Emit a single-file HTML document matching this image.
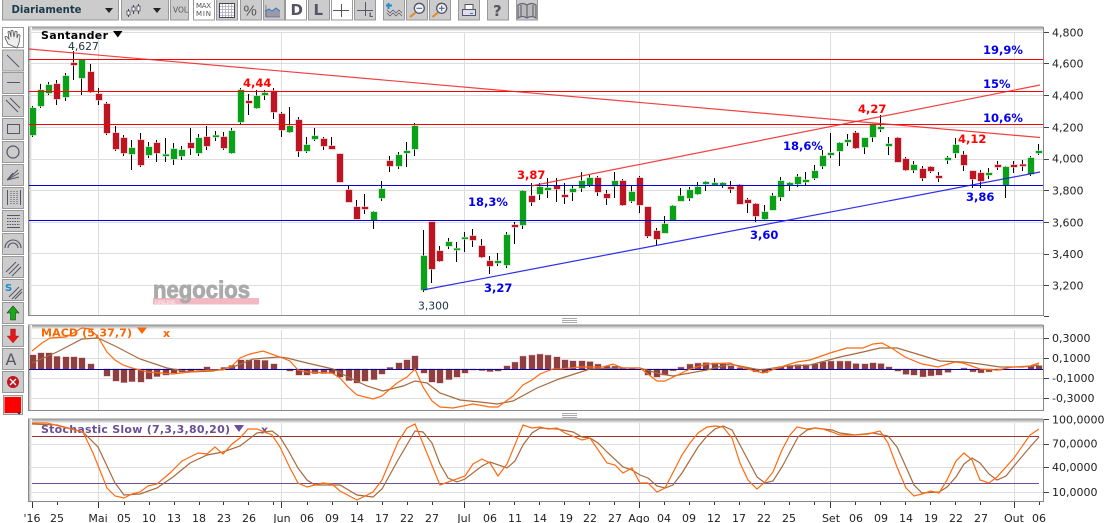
<!DOCTYPE html>
<html lang="pt"><head><meta charset="utf-8"><title>Santander</title>
<style>html,body{margin:0;padding:0;background:#fff;overflow:hidden}svg{display:block}text{font-family:"DejaVu Sans","Liberation Sans",sans-serif}.b{font-weight:bold;font-size:11.5px}.a{font-size:11px;fill:#222}.d{font-size:11px;fill:#222;text-anchor:middle}</style></head>
<body>
<svg xmlns="http://www.w3.org/2000/svg" width="1111" height="523" viewBox="0 0 1111 523">
<defs>
<linearGradient id="t" x1="0" y1="0" x2="0" y2="1"><stop offset="0" stop-color="#8a8a8a"/><stop offset=".5" stop-color="#c8c8c8"/><stop offset="1" stop-color="#fff"/></linearGradient>
<linearGradient id="l" x1="0" y1="0" x2="1" y2="0"><stop offset="0" stop-color="#a0a0a0"/><stop offset=".5" stop-color="#d0d0d0"/><stop offset="1" stop-color="#fff"/></linearGradient>
</defs>
<rect width="1111" height="523" fill="#fff"/>

<!-- top toolbar buttons -->
<g fill="#ccc" stroke="#999">
<rect x="2.5" y="-2" width="116" height="22"/><rect x="121.5" y="-2" width="47" height="22"/><rect x="170.5" y="-2" width="18" height="22"/>
<rect x="193.5" y="-2" width="21" height="22" fill="#fff"/><rect x="216.5" y="-2" width="21" height="22"/><rect x="240.5" y="-2" width="21" height="22"/><rect x="263.5" y="-2" width="21" height="22"/>
<rect x="285.5" y="-2" width="21" height="22" fill="#fff"/><rect x="308.5" y="-2" width="21" height="22"/><rect x="331.5" y="-2" width="21" height="22" fill="#fff"/><rect x="354.5" y="-2" width="21" height="22"/>
<rect x="383.5" y="-2" width="21" height="22"/><rect x="406.5" y="-2" width="21" height="22"/><rect x="429.5" y="-2" width="21" height="22"/><rect x="458.5" y="-2" width="21" height="22"/><rect x="487.5" y="-2" width="21" height="22"/><rect x="516.5" y="-2" width="21" height="22"/>
</g>
<text x="11.5" y="13" font-size="10.5" font-weight="bold" fill="#1d3a48" textLength="70" lengthAdjust="spacingAndGlyphs">Diariamente</text>
<path d="M105 8h8l-4 5zM153 8h8l-4 5z" fill="#222"/>
<path d="M128.500 9v8M133.500 5v9M138.500 4v10" stroke="#445" fill="none"/>
<path d="M127 11h3v4h-3zM132 7h3v4h-3zM137 6h3v5h-3z" fill="#fff" stroke="#445" stroke-width=".8"/>
<text x="173" y="12.500" font-size="7.500" fill="#555" textLength="15">VOL</text>
<text x="196" y="8" font-size="7" fill="#555" textLength="15">MAX</text><text x="196" y="16" font-size="7" fill="#555" textLength="15">MIN</text>
<rect x="219.500" y="3.500" width="15" height="14" fill="#fff" stroke="#445"/>
<path d="M222.500 4v13M225.500 4v13M228.500 4v13M231.500 4v13M220 6.500h14M220 9.500h14M220 12.500h14M220 15.500h14" stroke="#aab" stroke-width=".8"/>
<text x="243.500" y="15.500" font-size="15" fill="#555" style="font-family:'Liberation Sans',sans-serif">%</text>
<path d="M265 11l4-2 3 2 4-3 4 3v6h-15z" fill="#99a" stroke="none"/><path d="M265 11l4-2 3 2 4-3 4 3" stroke="#2a7fc0" fill="none"/><path d="M266 5v12h14" stroke="#667" fill="none" stroke-width=".7"/>
<text x="290.500" y="15" font-size="15" font-weight="bold" fill="#556">D</text>
<text x="313.500" y="15" font-size="15" font-weight="bold" fill="#556">L</text>
<path d="M341.500 4v13M333 10.500h16M365.500 2v14M357 10.500h16" stroke="#556" fill="none"/>
<text x="369" y="17" font-size="6.500" fill="#556" font-weight="bold">L</text>
<path d="M386 5.500h6M388.500 3v6" stroke="#1a8cd0" stroke-width="2"/>
<path d="M387 13l3 3 3-3 3 3 3-3 3 3M387 10l3 3 3-3 3 3 3-3 3 3" stroke="#556" stroke-width=".7" fill="none"/>
<circle cx="419.300" cy="8.300" r="5" fill="#eef3fb" stroke="#556" stroke-width="1.300"/><path d="M416.500 8.300h5.600" stroke="#556"/><path d="M415.500 12.500l-5.500 4.500" stroke="#e08a20" stroke-width="2"/>
<circle cx="441.700" cy="8.300" r="5" fill="#eef3fb" stroke="#556" stroke-width="1.300"/><path d="M439 8.300h5.600M441.700 5.500v5.600" stroke="#556"/><path d="M438 12.500l-5.500 4.500" stroke="#e08a20" stroke-width="2"/>
<path d="M465 4.500h8v5h-8z" fill="#fff" stroke="#556"/><path d="M462.500 9.500h13v6h-13z" fill="#dde" stroke="#556"/><path d="M470 13.500h3" stroke="#1a8cd0"/>
<text x="493" y="16" font-size="15" font-weight="bold" fill="#556">?</text>
<path d="M518 5c3-2 6-2 9 0c3-2 6-2 9 0v13c-3-2-6-2-9 0c-3-2-6-2-9 0zM527 5v13M521 5v11M533 5v11" fill="#bbb" stroke="#667" stroke-width="1.200"/>

<!-- left toolbar -->
<g fill="#ccc" stroke="#999">
<rect x="2.500" y="27.500" width="21" height="20" fill="#fff"/>
<rect x="2.500" y="50" width="21" height="21"/><rect x="2.500" y="72.500" width="21" height="21"/><rect x="2.500" y="95.500" width="21" height="21"/><rect x="2.500" y="118.500" width="21" height="21"/><rect x="2.500" y="141.500" width="21" height="21"/><rect x="2.500" y="164.500" width="21" height="21"/><rect x="2.500" y="187.500" width="21" height="21"/><rect x="2.500" y="210.500" width="21" height="21"/><rect x="2.500" y="233.500" width="21" height="21"/><rect x="2.500" y="256.500" width="21" height="21"/><rect x="2.500" y="279.500" width="21" height="21"/><rect x="2.500" y="302.500" width="21" height="21"/><rect x="2.500" y="325.500" width="21" height="21"/><rect x="2.500" y="348.500" width="21" height="21"/><rect x="2.500" y="371.500" width="21" height="21"/>
<rect x="3.500" y="395.500" width="19" height="19" fill="#ddd"/>
</g>
<path d="M8 44c-1-3-3-5-3-7c0-1 2-1 3 1l1 1-1-7c0-1 2-1 2 1l1 4 0-6c0-1 2-1 2 0l1 6 1-5c0-1 2-1 2 0l0 6 1-3c1-1 2 0 2 1l-1 7c-1 2-1 3-2 5z" fill="#eee" stroke="#555" stroke-width=".8"/>
<path d="M7 55l12 12M7 82.500h13M6 100l12 12M10 98l10 10" stroke="#556" fill="none"/>
<rect x="7.500" y="124.500" width="12" height="9" fill="none" stroke="#556"/>
<circle cx="13" cy="152" r="6" fill="none" stroke="#556" stroke-width="1.200"/>
<path d="M7 180l11-10M7 180l12-7M7 180l12-3M7 180l6-7" stroke="#556" fill="none"/>
<path d="M7.500 190v15M20.500 190v15M11 190v15M14 190v15M17 190v15" stroke="#556" fill="none"/>
<path d="M11 190v15M14 190v15M17 190v15" stroke="#ccc" stroke-dasharray="1 1" fill="none"/>
<path d="M7 215.500h13M7 227.500h13" stroke="#556" fill="none"/><path d="M7 218.500h13M7 221.500h13M7 224.500h13" stroke="#556" stroke-dasharray="1.500 1" fill="none"/>
<path d="M5 248a8 8 0 0 1 16 0M8 248a5 5 0 0 1 10 0" stroke="#556" fill="none" stroke-width="1.100"/>
<path d="M6 272l10-10M9 274l10-10M12 276l9-9" stroke="#556" fill="none"/>
<text x="5" y="291" font-size="10" font-weight="bold" fill="#1a8cd0">S</text>
<path d="M9 297l10-10M12 299l10-10M15 299l7-7" stroke="#556" fill="none"/>
<path d="M13 306l6 7h-3.500v7h-5v-7h-3.500z" fill="#10b010" stroke="#333" stroke-width=".6"/>
<path d="M13 343l6-7h-3.500v-7h-5v7h-3.500z" fill="#e8141c" stroke="#733" stroke-width=".4"/>
<text x="5.500" y="365" font-size="16" fill="#556">A</text>
<circle cx="13" cy="382" r="6" fill="#c0141f"/><path d="M10 379l6 6M16 379l-6 6" stroke="#fff" stroke-width="1.300"/>
<rect x="4.500" y="397" width="16.500" height="16" fill="#f00"/><path d="M17 412.500h4l-2 2z" fill="#222"/>

<!-- main chart panel -->
<rect x="28" y="26.500" width="1015" height="5" fill="url(#t)"/>
<rect x="28" y="27" width="4" height="288" fill="url(#l)"/>
<g stroke="#ddd" fill="none">
<path d="M29 32.500h1014M29 63.500h1014M29 95.500h1014M29 127.500h1014M29 159.500h1014M29 190.500h1014M29 222.500h1014M29 253.500h1014M29 285.500h1014"/>
<path d="M98.500 32v283M281.500 32v283M464.500 32v283M639.500 32v283M830.500 32v283M1014.500 32v283"/>
</g>
<path d="M28.500 27v288.500H1043.500V27" fill="none" stroke="#888"/>
<path d="M1044 32.500h5M1044 63.500h5M1044 95.500h5M1044 127.500h5M1044 159.500h5M1044 190.500h5M1044 222.500h5M1044 254.500h5M1044 285.500h5M1044 316.500h5" stroke="#444"/>
<g class="a">
<text class="a" x="1052" y="36.500">4,800</text><text class="a" x="1052" y="67.500">4,600</text><text class="a" x="1052" y="99.500">4,400</text><text class="a" x="1052" y="131.500">4,200</text><text class="a" x="1052" y="162.500">4,000</text><text class="a" x="1052" y="194.500">3,800</text><text class="a" x="1052" y="226.500">3,600</text><text class="a" x="1052" y="258">3,400</text><text class="a" x="1052" y="289.500">3,200</text>
</g>

<!-- watermark -->
<rect x="153" y="298" width="106" height="6.500" fill="#f2b9c2"/>
<text x="153" y="298" font-size="24" font-weight="bold" fill="#aaa" stroke="#aaa" stroke-width=".9" textLength="97" lengthAdjust="spacingAndGlyphs" style="font-family:'Liberation Sans',sans-serif">negocios</text>
<text x="155" y="304" font-size="5.500" fill="#fff" style="font-family:'Liberation Serif',serif">ONLINE</text>

<!-- wicks -->
<path stroke="#000" fill="none" d="M32.500 106V137M40.500 84V108M48.500 82V95M56.500 80V105M65.500 73V101M73.500 51V80M81.500 60V95M90.500 64V93M98.500 88V105M106.500 102V135M115.500 126V151M123.500 135V156M131.500 140V170M140.500 133V167M148.500 142V158M156.500 140V162M165.500 138V162M173.500 143V165M181.500 146V160M190.500 128V155M198.500 134V156M206.500 126V150M215.500 131V141M223.500 132V150M231.500 128V154M240.500 88V124M248.500 94V115M256.500 90V109M264.500 90V100M273.500 88V119M281.500 112V137M289.500 107V133M298.500 117V157M306.500 137V153M314.500 128V141M323.500 137V150M331.500 137V149M339.500 154V182M348.500 186V202M356.500 200V219M364.500 194V214M373.500 211V229M381.500 181V201M389.500 156V172M398.500 152V169M406.500 142V167M414.500 123V156M423.500 230V292M431.500 222V283M439.500 246V262M448.500 238V249M456.500 242V262M464.500 232V252M472.500 229V247M481.500 239V258M489.500 256V274M497.500 253V266M506.500 232V268M514.500 222V244M522.500 190V229M531.500 183V206M539.500 183V200M547.500 178V198M556.500 178V202M564.500 183V204M572.500 186V201M581.500 172V192M589.500 175V187M597.500 176V196M606.500 190V205M614.500 172V198M622.500 179V206M631.500 186V203M639.500 176V213M647.500 207V238M656.500 228V245M664.500 216V233M672.500 205V220M680.500 188V201M689.500 187V201M697.500 182V195M705.500 181V191M714.500 178V186M722.500 182V188M730.500 181V193M739.500 184V204M747.500 198V213M755.500 203V222M764.500 205V220M772.500 193V210M780.500 177V201M789.500 182V191M797.500 174V187M805.500 172V185M814.500 165V180M822.500 150V169M830.500 133V158M839.500 142V166M847.500 134V146M855.500 131V149M864.500 138V154M872.500 123V142M880.500 115V132M888.500 137V155M897.500 137V162M905.500 157V171M913.500 161V173M922.500 166V181M930.500 166V173M938.500 172V182M947.500 156V164M955.500 138V158M963.500 151V171M972.500 171V188M980.500 170V188M988.500 168V179M997.500 161V170M1005.500 166V198M1013.500 161V173M1022.500 160V171M1030.500 156V176M1038.500 144V155"/>
<!-- green bodies -->
<path fill="#0aa018" stroke="#b7e0bb" stroke-width="1.200" style="paint-order:stroke" d="M30 108h6V135h-6zM38 90h6V106h-6zM46 85h6V93h-6zM63 76h6V97h-6zM79 60h6V78h-6zM129 148h6V154h-6zM146 147h6V155h-6zM163 154.500h6V156h-6zM171 149h6V159h-6zM179 150h6V156h-6zM196 138h6V153h-6zM213 135.500h6V137h-6zM229 131h6V153h-6zM238 90h6V122h-6zM254 96h6V108h-6zM262 93h6V95h-6zM287 126h6V132h-6zM304 145h6V151h-6zM312 136h6V139h-6zM371 212h6V220h-6zM379 189h6V198h-6zM396 155h6V166h-6zM404 151h6V153h-6zM412 126h6V149h-6zM421 256h6V290h-6zM446 242h6V246h-6zM454 248.500h6V250h-6zM462 237.500h6V239h-6zM495 261h6V263h-6zM504 235h6V265h-6zM520 191h6V225h-6zM537 187h6V194h-6zM545 188h6V190h-6zM570 189h6V192h-6zM579 181h6V188h-6zM587 178h6V185h-6zM612 181h6V186h-6zM629 192h6V201h-6zM662 224h6V233h-6zM670 206h6V220h-6zM678 196h6V201h-6zM687 190h6V198h-6zM695 187h6V194h-6zM703 182h6V184h-6zM712 183h6V185h-6zM720 183h6V185h-6zM762 212h6V219h-6zM770 196h6V210h-6zM778 181h6V197h-6zM787 183h6V185h-6zM795 177h6V184h-6zM803 180h6V182h-6zM812 171h6V178h-6zM820 156h6V166h-6zM828 153h6V155h-6zM837 143h6V151h-6zM845 140h6V142h-6zM862 138h6V147h-6zM870 124h6V137h-6zM878 127h6V129h-6zM886 144h6V146h-6zM911 165h6V170h-6zM945 158h6V160h-6zM953 145h6V153h-6zM986 173h6V175h-6zM1003 167h6V185h-6zM1028 158h6V174h-6zM1036 151h6V153h-6z"/>
<!-- red bodies -->
<path fill="#bc1420" stroke="#ecb4ba" stroke-width="1.200" style="paint-order:stroke" d="M54 84h6V99h-6zM71 63h6V65h-6zM88 72h6V92h-6zM96 94h6V100h-6zM104 104h6V133h-6zM113 133h6V149h-6zM121 138h6V153h-6zM138 140h6V165h-6zM154 143h6V153h-6zM188 143h6V148h-6zM204 137h6V146h-6zM221 137h6V148h-6zM246 101h6V103h-6zM271 91h6V112h-6zM279 114h6V130h-6zM296 120h6V151h-6zM321 139h6V146h-6zM329 146h6V149h-6zM337 154h6V182h-6zM346 190h6V202h-6zM354 207h6V219h-6zM362 207h6V209h-6zM387 161h6V166h-6zM429 222h6V269h-6zM437 251h6V261h-6zM470 236h6V240h-6zM479 246h6V257h-6zM487 261h6V266h-6zM512 225h6V227h-6zM529 196h6V202h-6zM554 186h6V189h-6zM562 195h6V197h-6zM595 178h6V192h-6zM604 194h6V198h-6zM620 181h6V205h-6zM637 178h6V205h-6zM645 207h6V236h-6zM654 231h6V239h-6zM728 187h6V189h-6zM737 185h6V204h-6zM745 200h6V203h-6zM753 204h6V216h-6zM853 133h6V148h-6zM895 138h6V162h-6zM903 159h6V170h-6zM920 169h6V178h-6zM928 167h6V171h-6zM936 176h6V178h-6zM961 155h6V165h-6zM970 171h6V179h-6zM978 173h6V181h-6zM995 165h6V167h-6zM1011 165h6V167h-6zM1020 164.500h6V166h-6z"/>

<!-- trend lines -->
<g fill="none">
<path d="M29 59.500H1043M29 91.500H1043M29 124.500H1043" stroke="#f00"/>
<path d="M29 185.500H1043M29 220.500H1043" stroke="#00d"/>
<path d="M29 49L1040 137.500" stroke="#f02020" stroke-width="1.200" opacity=".85"/>
<path d="M531 186L1040 85" stroke="#f02020" stroke-width="1.200" opacity=".85"/>
<path d="M423 290L1040 172" stroke="#1818e8" stroke-width="1.200" opacity=".9"/>
</g>

<!-- chart labels -->
<text x="41" y="39" font-size="11" font-weight="bold" fill="#000" textLength="67">Santander</text>
<path d="M113 31h9.500l-4.700 6.500z" fill="#000"/>
<text x="68" y="50" font-size="10.800" fill="#234">4,627</text>
<text x="418" y="309.500" font-size="10.800" fill="#234">3,300</text>
<g fill="#f00" class="b">
<text class="b" x="243" y="87">4,44</text><text class="b" x="517" y="179">3,87</text><text class="b" x="858" y="113">4,27</text><text class="b" x="958" y="143">4,12</text>
</g>
<g fill="#00e" class="b">
<text class="b" x="484" y="292">3,27</text><text class="b" x="468" y="206">18,3%</text><text class="b" x="750" y="239">3,60</text><text class="b" x="783" y="150">18,6%</text><text class="b" x="966" y="201">3,86</text><text class="b" x="983" y="54">19,9%</text><text class="b" x="983" y="88">15%</text><text class="b" x="983" y="122">10,6%</text>
</g>

<!-- splitters -->
<path d="M562 318.500h15M562 320.500h15M562 322.500h15M562 413.500h15M562 415.500h15M562 417.500h15" stroke="#aaa"/>

<!-- MACD panel -->
<rect x="28" y="324.500" width="1015" height="5" fill="url(#t)"/>
<rect x="28" y="325" width="4" height="85" fill="url(#l)"/>
<path d="M29 338.500h1014M29 358.500h1014M29 378.500h1014M29 398.500h1014M98.500 330v80M281.500 330v80M464.500 330v80M639.500 330v80M830.500 330v80M1014.500 330v80" stroke="#ddd" fill="none"/>
<path d="M28.500 325v85.500H1043.500V325" fill="none" stroke="#888"/>
<path fill="#8f3f3f" stroke="#d8b8b8" stroke-width="1" style="paint-order:stroke" d="M30 369V355h6V369zM38 369V353h6V369zM46 369V353h6V369zM54 369V356.500h6V369zM63 369V357h6V369zM71 369V357h6V369zM79 369V358h6V369zM88 369V364h6V369zM104 369V376h6V369zM113 369V381h6V369zM121 369V382.500h6V369zM129 369V381.500h6V369zM138 369V382h6V369zM146 369V379h6V369zM154 369V376.500h6V369zM163 369V375h6V369zM171 369V373h6V369zM179 369V372h6V369zM188 369V372h6V369zM196 369V370h6V369zM204 369V367h6V369zM221 369V367.500h6V369zM229 369V365.500h6V369zM238 369V360h6V369zM246 369V360h6V369zM254 369V360h6V369zM262 369V360.500h6V369zM271 369V364h6V369zM287 369V371h6V369zM296 369V375h6V369zM304 369V375h6V369zM312 369V373.500h6V369zM321 369V373.500h6V369zM329 369V373.500h6V369zM337 369V377h6V369zM346 369V380.500h6V369zM354 369V383h6V369zM362 369V381h6V369zM371 369V379.500h6V369zM379 369V374h6V369zM387 369V367.500h6V369zM396 369V363h6V369zM404 369V360h6V369zM412 369V356h6V369zM421 369V373h6V369zM429 369V382h6V369zM437 369V383h6V369zM446 369V379.500h6V369zM454 369V377h6V369zM462 369V373h6V369zM470 369V370h6V369zM479 369V370.500h6V369zM487 369V371.500h6V369zM495 369V371h6V369zM504 369V366h6V369zM512 369V362.300h6V369zM520 369V356.300h6V369zM529 369V355.300h6V369zM537 369V354.300h6V369zM545 369V355.300h6V369zM554 369V357h6V369zM562 369V360h6V369zM570 369V361h6V369zM579 369V361h6V369zM587 369V361.700h6V369zM595 369V364.300h6V369zM604 369V366.300h6V369zM612 369V366.300h6V369zM620 369V367.700h6V369zM629 369V368h6V369zM645 369V375h6V369zM654 369V377h6V369zM662 369V375h6V369zM670 369V370.700h6V369zM678 369V367.300h6V369zM687 369V364.300h6V369zM695 369V363.300h6V369zM703 369V362.700h6V369zM712 369V363h6V369zM720 369V363.700h6V369zM728 369V365.700h6V369zM737 369V367.700h6V369zM745 369V368h6V369zM753 369V371.700h6V369zM762 369V372.700h6V369zM778 369V366.700h6V369zM787 369V365.700h6V369zM795 369V364.700h6V369zM803 369V364.700h6V369zM812 369V364h6V369zM820 369V362h6V369zM828 369V361.300h6V369zM837 369V361.300h6V369zM845 369V361.300h6V369zM853 369V363.700h6V369zM862 369V364h6V369zM870 369V363h6V369zM878 369V363.700h6V369zM886 369V367h6V369zM895 369V371h6V369zM903 369V374.300h6V369zM911 369V375h6V369zM920 369V376.700h6V369zM928 369V375.700h6V369zM936 369V375h6V369zM945 369V372.300h6V369zM961 369V368.300h6V369zM970 369V371.700h6V369zM978 369V372.700h6V369zM986 369V371.700h6V369zM995 369V370.300h6V369zM1028 369V366.300h6V369zM1036 369V365.700h6V369z"/>
<path d="M29 369.500H1043" stroke="#00a" fill="none"/>
<text x="41" y="336.500" font-size="11" font-weight="bold" fill="#f60" textLength="91">MACD (5,37,7)</text>
<path d="M137 327.500h10l-5 6.500z" fill="#f60"/>
<text x="163" y="337" font-size="11" font-weight="bold" fill="#f60">x</text>
<polyline fill="none" stroke="#a86a3c" stroke-width="1.200" points="32,363 57,352 82,339 98,338 115,346 140,359 167,368 190,372 213,371 233,367 253,359 279,357 287,358 307,363 333,369 348,377 367,386 383,391 403,386 415,381 427,383 440,393 460,400 480,402 497,404 513,401 537,388 559,379 590,369 620,368 640,368 660,374 673,376 707,370 730,364 760,370 787,366 810,365 840,357 863,352 880,348 897,348 917,354 940,361 963,362 980,364 1000,367 1023,367 1039,365"/>
<polyline fill="none" stroke="#ff6a10" stroke-width="1.200" points="32,351 42,343 50,338 66,337 82,328 90,329 98,337 107,352 115,360 123,365 132,368 148,372 173,374 190,372 207,370 223,370 233,365 240,358 250,354 263,351 280,357 290,361 298,370 307,372 332,373 340,378 348,387 357,395 373,399 382,396 397,383 407,377 415,369 423,387 432,401 440,407 453,408 473,404 490,407 498,407 513,396 523,385 532,380 540,374 553,369 560,369 580,367 603,367 613,364 623,368 640,368 657,381 665,381 690,369 707,364 730,363 740,367 763,373 787,365 797,362 810,360 830,353 840,350 847,348 863,348 873,344 882,343 893,349 905,357 922,364 938,367 955,362 963,363 980,369 997,370 1013,367 1030,366 1039,363"/>
<path d="M1044 338.500h5M1044 358.500h5M1044 378.500h5M1044 398.500h5" stroke="#444"/>
<text class="a" x="1052" y="342">0,3000</text><text class="a" x="1052" y="362">0,1000</text><text class="a" x="1052" y="382">-0,1000</text><text class="a" x="1052" y="402">-0,3000</text>

<!-- Stochastic panel -->
<rect x="28" y="418.500" width="1015" height="5" fill="url(#t)"/>
<rect x="28" y="419" width="4" height="82" fill="url(#l)"/>
<path d="M29 444.500h1014M29 467.500h1014M29 492.500h1014M98.500 423v78M281.500 423v78M464.500 423v78M639.500 423v78M830.500 423v78M1014.500 423v78" stroke="#ddd" fill="none"/>
<path d="M28.500 419v82.500H1043.500V419" fill="none" stroke="#888"/>
<path d="M32 436.500H1039" stroke="#933"/><path d="M32 483.500H1039" stroke="#6a4e96"/>
<text x="41" y="433" font-size="11" font-weight="bold" fill="#6b4f96" textLength="189">Stochastic Slow (7,3,3,80,20)</text>
<path d="M234 425h10l-5 7z" fill="#6b4f96"/>
<text x="261" y="433.500" font-size="11" font-weight="bold" fill="#6b4f96">x</text>
<polyline fill="none" stroke="#a86a3c" stroke-width="1.200" points="32,424 57,425 83,432 98,447 115,483 124,495 140,494 157,488 173,477 190,463 207,455 223,452 240,446 257,433 272,431 280,437 288,450 298,468 307,480 315,485 323,485 340,485 357,495 373,497 382,489 398,460 415,431 423,432 432,443 440,464 448,478 457,482 465,479 482,466 490,462 507,468 515,461 523,445 532,433 540,428 557,429 573,432 582,437 590,438 598,443 607,452 623,467 632,470 640,475 648,478 657,486 665,488 673,485 682,473 698,447 707,436 715,429 723,426 732,430 740,445 757,477 765,483 773,481 782,467 790,452 798,437 807,430 815,428 832,430 840,433 855,435 873,433 888,436 897,447 906,467 914,485 922,493 939,492 947,487 956,477 964,464 972,458 980,463 989,474 997,480 1006,476 1014,466 1030,447 1039,437"/>
<polyline fill="none" stroke="#ff6a10" stroke-width="1.200" points="32,423 47,423 83,432 93,453 107,488 115,496 124,498 132,494 140,492 148,486 157,484 170,473 182,461 198,453 207,454 215,447 223,454 232,444 240,438 248,429 257,429 272,435 280,447 290,468 298,483 307,487 323,483 332,484 340,491 357,500 373,492 382,480 398,442 407,428 415,424 440,485 465,476 473,464 482,459 490,463 498,476 507,464 523,425 532,428 540,427 548,429 557,428 565,433 582,440 590,438 607,463 615,465 623,473 632,468 640,483 648,483 657,492 665,488 682,455 690,443 698,433 707,427 715,426 723,427 732,438 740,463 748,480 757,489 765,482 773,472 782,450 790,435 797,427 807,429 815,428 823,429 832,432 840,435 855,435 868,434 880,431 888,443 897,467 906,488 914,496 922,494 931,491 939,493 947,480 956,461 964,453 972,460 980,480 989,483 997,477 1014,458 1030,435 1039,429"/>
<path d="M1044 419.500h5M1044 444.500h5M1044 467.500h5M1044 492.500h5" stroke="#444"/>
<text class="a" x="1052" y="423.500">100,0000</text><text class="a" x="1052" y="447.500">70,0000</text><text class="a" x="1052" y="471">40,0000</text><text class="a" x="1052" y="496">10,0000</text>

<!-- date axis -->
<path stroke="#333" fill="none" d="M32.500 502v6M98.500 502v6M281.500 502v6M464.500 502v6M639.500 502v6M830.500 502v6M1014.500 502v6M57.500 502v3M124.500 502v3M149.500 502v3M174.500 502v3M199.500 502v3M223.500 502v3M248.500 502v3M273.500 502v3M307.500 502v3M332.500 502v3M357.500 502v3M382.500 502v3M407.500 502v3M432.500 502v3M489.500 502v3M514.500 502v3M539.500 502v3M564.500 502v3M589.500 502v3M614.500 502v3M664.500 502v3M689.500 502v3M714.500 502v3M739.500 502v3M764.500 502v3M789.500 502v3M814.500 502v3M855.500 502v3M880.500 502v3M905.500 502v3M930.500 502v3M955.500 502v3M980.500 502v3M1039.500 502v3"/>
<text class="d" x="32" y="522">'16</text><text class="d" x="57" y="522">25</text><text class="d" x="98" y="522">Mai</text><text class="d" x="124" y="522">05</text><text class="d" x="149" y="522">10</text><text class="d" x="174" y="522">13</text><text class="d" x="199" y="522">18</text><text class="d" x="224" y="522">23</text><text class="d" x="249" y="522">26</text><text class="d" x="282" y="522">Jun</text><text class="d" x="307" y="522">06</text><text class="d" x="332" y="522">09</text><text class="d" x="357" y="522">14</text><text class="d" x="382" y="522">17</text><text class="d" x="407" y="522">22</text><text class="d" x="432" y="522">27</text><text class="d" x="464" y="522">Jul</text><text class="d" x="490" y="522">06</text><text class="d" x="515" y="522">11</text><text class="d" x="540" y="522">14</text><text class="d" x="566" y="522">19</text><text class="d" x="590" y="522">22</text><text class="d" x="615" y="522">27</text><text class="d" x="639" y="522">Ago</text><text class="d" x="664" y="522">04</text><text class="d" x="689" y="522">09</text><text class="d" x="714" y="522">12</text><text class="d" x="739" y="522">17</text><text class="d" x="764" y="522">22</text><text class="d" x="789" y="522">25</text><text class="d" x="831" y="522">Set</text><text class="d" x="856" y="522">06</text><text class="d" x="881" y="522">09</text><text class="d" x="906" y="522">14</text><text class="d" x="931" y="522">19</text><text class="d" x="956" y="522">22</text><text class="d" x="981" y="522">27</text><text class="d" x="1014" y="522">Out</text><text class="d" x="1039" y="522">06</text>
</svg>
</body></html>
